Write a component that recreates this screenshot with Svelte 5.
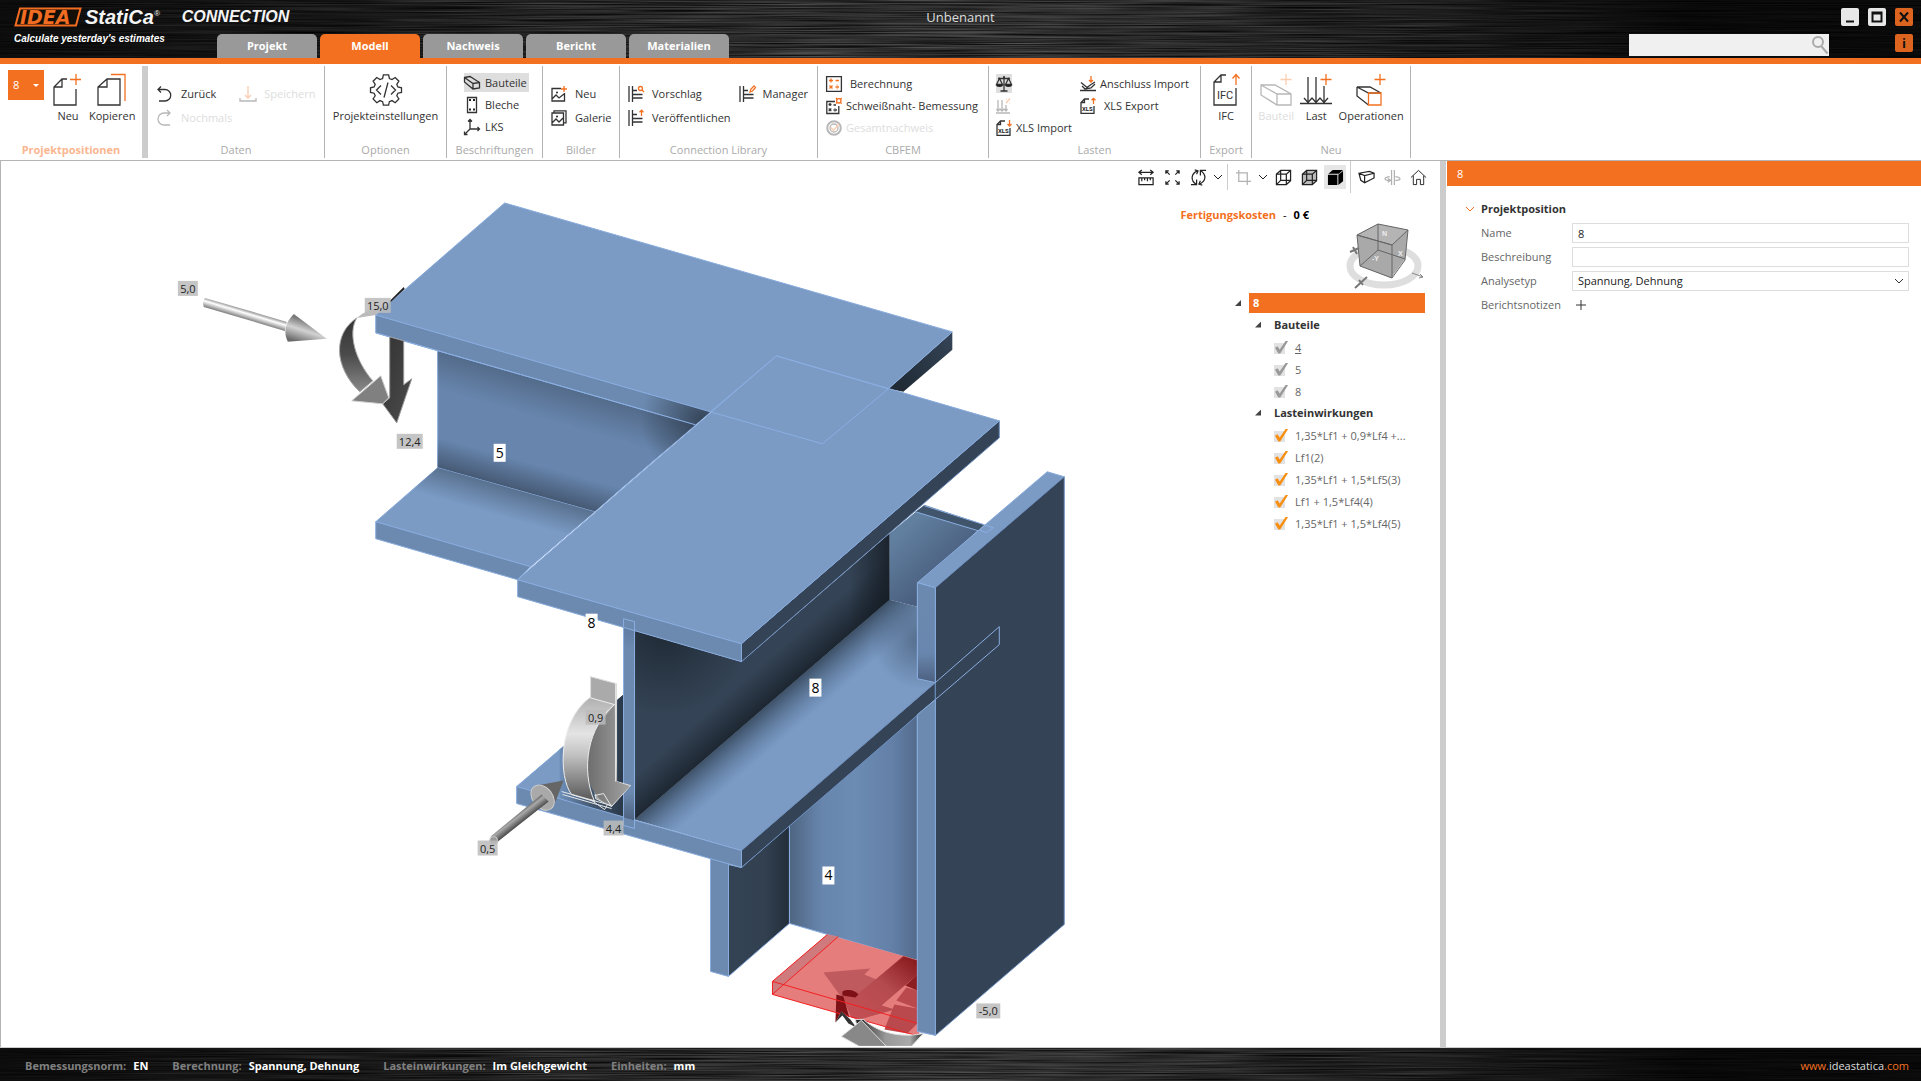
<script lang="ts">
  type Item = { icon: string; label: string; off?: boolean; active?: boolean };

  const tabs = ['Projekt', 'Modell', 'Nachweis', 'Bericht', 'Materialien'];
  let activeTab = $state('Modell');

  const labels: Item[] = [
    { icon: 'member', label: 'Bauteile', active: true },
    { icon: 'plate', label: 'Bleche' },
    { icon: 'axes', label: 'LKS' }
  ];

  const members = ['4', '5', '8'];
  const loads = ['1,35*Lf1 + 0,9*Lf4 +...', 'Lf1(2)', '1,35*Lf1 + 1,5*Lf5(3)', 'Lf1 + 1,5*Lf4(4)', '1,35*Lf1 + 1,5*Lf4(5)'];

  const status = [
    ['Bemessungsnorm:', 'EN'],
    ['Berechnung:', 'Spannung, Dehnung'],
    ['Lasteinwirkungen:', 'Im Gleichgewicht'],
    ['Einheiten:', 'mm']
  ];

  const forceTags = [
    { x: 178, y: 281, w: 20, text: '5,0' },
    { x: 365, y: 298, w: 26, text: '15,0' },
    { x: 397, y: 434, w: 26, text: '12,4' },
    { x: 586, y: 710, w: 20, text: '0,9' },
    { x: 604, y: 821, w: 20, text: '4,4' },
    { x: 478, y: 841, w: 20, text: '0,5' },
    { x: 977, y: 1004, w: 24, text: '-5,0' }
  ];

  const memberTags = [
    { x: 494, y: 444, text: '5' },
    { x: 586, y: 614, text: '8' },
    { x: 810, y: 679, text: '8' },
    { x: 823, y: 867, text: '4' }
  ];

  let name = $state('8');
  let description = $state('');
  let search = $state('');
</script>

{#snippet brushed()}
  <svg class="brushed" aria-hidden="true">
    <filter id="grain" x="0" y="0" width="100%" height="100%" color-interpolation-filters="sRGB">
      <feTurbulence type="fractalNoise" baseFrequency="0.008 0.9" numOctaves="2" seed="4" />
      <feColorMatrix values="0.45 0 0 0 -0.04  0.45 0 0 0 -0.04  0.45 0 0 0 -0.04  0 0 0 0 1" />
    </filter>
    <rect width="100%" height="100%" filter="url(#grain)" />
  </svg>
{/snippet}

{#snippet icon(kind: string)}
  <svg class="icon" viewBox="0 0 16 16" aria-hidden="true">
    {#if kind === 'undo'}
      <path d="M4 0.500 1 3.500l3 3M1 3.500h7a5.500 5.500 0 0 1 0 11.500H2" />
    {:else if kind === 'redo'}
      <path d="M10 0l3 3-3 3M13 3H7a5.500 5.500 0 0 0 0 12h6" />
    {:else if kind === 'save'}
      <path class="hot" d="M8 0v12M5 9l3 3 3-3" /><path d="M0 12v3h16v-3" />
    {:else if kind === 'member'}
      <path d="M0.500 2.500 6 1.500l9.500 6v5.500L9 14 0.500 7zM0.500 2.500 9 8.500l6.500-1M9 8.500V14" />
    {:else if kind === 'plate'}
      <path d="M3.500 0.500h9v15h-9z" /><path class="fill" d="M5 2h2v2H5zM9 2h2v2H9zM5 11.500h2v2H5zM9 11.500h2v2H9z" />
    {:else if kind === 'axes'}
      <path d="M6 10V0.500M4 2.500l2-2 2 2M6 10h9.500M13.500 8l2 2-2 2M6 10l-5.500 5.500M0.500 12.500v3h3" />
    {:else if kind === 'picture'}
      <path d="M10 2.500H1v12.500h12.500V7M1 13l4-4 3 3 5-4" /><circle class="fill" cx="6" cy="6.500" r="1" /><path class="hot" d="M13 0v6M10 3h6" />
    {:else if kind === 'gallery'}
      <path d="M1 3h11.500v12H1zM3 3V0.800h12v12h-2.500M1 13l4-4 3 3 4-4" /><circle class="fill" cx="6" cy="6.500" r="1" />
    {:else if kind === 'propose' || kind === 'manager' || kind === 'publish'}
      <path d="M1 0v16M4.500 0v16M4.500 4.500H9M4.500 8.500h10M4.500 12h10" />
      {#if kind === 'propose'}
        <circle class="hot" cx="12.500" cy="2.500" r="2" /><path class="hot" d="M14 4l2 2" />
      {:else if kind === 'manager'}
        <path class="hot" d="M11 6l1-3 3-3 1.500 1.500-3 3.500z" />
      {:else}
        <path class="hot" d="M13.500 6V0M11.500 2.200l2-2 2 2" />
      {/if}
    {:else if kind === 'calc'}
      <path d="M0.600 0.600h14.800v14.800H0.600z" /><path class="hot" d="M3 4.500h4M5 2.500v4M9.500 4.500h3.500M3.500 9.500l3 3M6.500 9.500l-3 3M9.500 11H13M11.200 8.800v0.800M11.200 12.400v0.800" />
    {:else if kind === 'weld'}
      <path d="M9 3.500H0.800v12h12V8M2.500 6.500h3M4 5v3M2.700 10.500l2.600 2.600M5.300 10.500l-2.600 2.600M7.500 7H10M7.500 12h3.500M9 10v0.500M9 13.500v0.500" /><circle class="hot" cx="12.800" cy="2.800" r="2.200" /><path class="hot" d="M10 0l1.200 1.200M15.600 0l-1.200 1.200M10 5.600l1.200-1.200M15.600 5.600l-1.200-1.200" />
    {:else if kind === 'overall'}
      <circle class="ring" cx="8" cy="8" r="6.800" /><circle cx="8" cy="8" r="4" /><path class="hot" d="M5 7.500l2.500 3L13 4" />
    {:else if kind === 'balance'}
      <path d="M8 1v13.500M4.500 15h7M2 2.500h12M3.500 2.500l-3 6h6zM12.500 2.500l-3 6h6zM7 1h2" /><path class="fill" d="M0 8.500h7a3.500 2.500 0 0 1-7 0zM9 8.500h7a3.500 2.500 0 0 1-7 0z" />
    {:else if kind === 'loadpct'}
      <path d="M2 2v11M6 2v11M10 7v6M0.500 11l1.500 2 2-2 2 2 2-2 2 2 1.500-2M0 15h14" /><path class="hot" d="M10 5l4-4.500M10.500 1h0.500M13.500 5h0.500" />
    {:else if kind === 'xlsin' || kind === 'xlsout'}
      <path d="M9 1H4.500L1 4.500V15.300h13V8M1 4.500h3.500V1" />
      <text x="2" y="13">XLS</text>
      {#if kind === 'xlsin'}
        <path class="hot" d="M13.500 0v6M11.500 4l2 2 2-2" />
      {:else}
        <path class="hot" d="M13.500 6V0.300M11.500 2.300l2-2 2 2" />
      {/if}
    {:else if kind === 'joint'}
      <path d="M0 14.500h16M1 6.500l6 5 4-3 4-2.500M2 10l3 3 6-1 4-4" /><path class="hot" d="M11 0v6M9 4l2 2 2-2" />
    {/if}
  </svg>
{/snippet}

{#snippet tool({ icon: kind, label, off, active }: Item)}
  <button class="tool" class:active disabled={off} aria-label={label || kind}>
    {@render icon(kind)}{#if label}<span>{label}</span>{/if}
  </button>
{/snippet}

{#snippet wireCube()}
  <svg viewBox="0 0 18 18" aria-hidden="true">
    <path class="body" d="M1.500 5.500 6 1.500h10.500v11L12 16.500H1.500z" />
    <path d="M1.500 5.500H12l4.500-4M12 5.500v11M6 1.500V12h10.500M6 12l-4.500 4.500" />
  </svg>
{/snippet}

<div class="page">
  <header>
    {@render brushed()}
    <div class="top-row">
      <div class="brand">
        <svg width="68" height="20" viewBox="0 0 68 20" aria-hidden="true">
          <path d="M6 1.500h60.500L62 18.500H1.500z" fill="#151007" stroke="#f26c22" stroke-width="2" />
          <text x="6" y="17">IDEA</text>
        </svg>
        <span class="product">StatiCa<sup>®</sup></span>
        <span class="module">CONNECTION</span>
      </div>
      <div class="title">Unbenannt</div>
      <div class="window-buttons">
        <button aria-label="Minimieren"><svg viewBox="0 0 18 18"><path d="M5 13.500h8" /></svg></button>
        <button aria-label="Maximieren"><svg viewBox="0 0 18 18"><path d="M4.500 4.500h9v9h-9zM4 5.500h10" /></svg></button>
        <button class="hot-button" aria-label="Schließen"><svg viewBox="0 0 18 18"><path d="M5 4.500l8 9M13 4.500l-8 9" /></svg></button>
      </div>
    </div>
    <div class="tab-row">
      <div class="tagline">Calculate yesterday's estimates</div>
      <nav>
        {#each tabs as tab}
          <button class="tab" class:selected={tab === activeTab} onclick={() => (activeTab = tab)}>{tab}</button>
        {/each}
      </nav>
      <div class="search">
        <input type="text" aria-label="Suche" bind:value={search} />
        <svg viewBox="0 0 18 20" aria-hidden="true"><circle cx="7" cy="7" r="5" /><path d="M10.500 11.500l6 7" /></svg>
      </div>
      <button class="info hot-button" aria-label="Info">i</button>
    </div>
  </header>

  <section class="ribbon">
    <div class="group current">
      <div class="content items">
        <button class="item-picker" aria-label="Projektposition">8 <span class="caret"></span></button>
        <button class="big new-item">
          <svg viewBox="0 0 32 32" aria-hidden="true"><path d="M15 5h-5L2 13v18h22V15M2 13h8V5" /><path class="hot" d="M24 0v11M18 5.500h11" /></svg>
          Neu
        </button>
        <button class="big">
          <svg viewBox="0 0 32 32" aria-hidden="true"><path d="M11 5h13v26H2V13zM2 13h9V5" /><path class="hot" d="M15 0.500h14V27" /></svg>
          Kopieren
        </button>
      </div>
      <h2>Projektpositionen</h2>
    </div>

    <div class="group">
      <div class="content pair data">
        <div class="stack">
          {@render tool({ icon: 'undo', label: 'Zurück' })}
          {@render tool({ icon: 'redo', label: 'Nochmals', off: true })}
        </div>
        <div class="stack">
          {@render tool({ icon: 'save', label: 'Speichern', off: true })}
        </div>
      </div>
      <h2>Daten</h2>
    </div>

    <div class="group">
      <div class="content center">
        <button class="big">
          <svg viewBox="0 0 32 32" aria-hidden="true">
            <path d="M13.400 0.800h5.200l0.800 3.700 2.600 1.100 3.200-2.100 3.700 3.700-2.100 3.200 1.100 2.600 3.600 0.800v4.600l-3.600 0.800-1.100 2.600 2.100 3.200-3.700 3.700-3.200-2.100-2.600 1.100-0.800 3.500h-5.200l-0.800-3.500-2.600-1.100-3.200 2.100-3.700-3.700 2.100-3.200-1.100-2.600-3.600-0.800v-4.600l3.600-0.800 1.100-2.600-2.100-3.200 3.700-3.700 3.200 2.100 2.600-1.100zM11 11.500 6.500 16l4.500 4.500M21 11.500l4.500 4.500-4.500 4.500M18 8.500l-4 15" />
          </svg>
          Projekteinstellungen
        </button>
      </div>
      <h2>Optionen</h2>
    </div>

    <div class="group">
      <div class="content triple member-labels">
        {#each labels as l}{@render tool(l)}{/each}
      </div>
      <h2>Beschriftungen</h2>
    </div>

    <div class="group">
      <div class="content stack pictures">
        {@render tool({ icon: 'picture', label: 'Neu' })}
        {@render tool({ icon: 'gallery', label: 'Galerie' })}
      </div>
      <h2>Bilder</h2>
    </div>

    <div class="group">
      <div class="content pair library">
        <div class="stack">
          {@render tool({ icon: 'propose', label: 'Vorschlag' })}
          {@render tool({ icon: 'publish', label: 'Veröffentlichen' })}
        </div>
        <div class="stack">
          {@render tool({ icon: 'manager', label: 'Manager' })}
        </div>
      </div>
      <h2>Connection Library</h2>
    </div>

    <div class="group">
      <div class="content triple tight cbfem">
        {@render tool({ icon: 'calc', label: 'Berechnung' })}
        {@render tool({ icon: 'weld', label: 'Schweißnaht- Bemessung' })}
        {@render tool({ icon: 'overall', label: 'Gesamtnachweis', off: true })}
      </div>
      <h2>CBFEM</h2>
    </div>

    <div class="group">
      <div class="content pair loads">
        <div class="triple tight">
          {@render tool({ icon: 'balance', label: '', active: true })}
          {@render tool({ icon: 'loadpct', label: '', off: true })}
          {@render tool({ icon: 'xlsin', label: 'XLS Import' })}
        </div>
        <div class="triple tight">
          {@render tool({ icon: 'joint', label: 'Anschluss Import' })}
          {@render tool({ icon: 'xlsout', label: 'XLS Export' })}
        </div>
      </div>
      <h2>Lasten</h2>
    </div>

    <div class="group">
      <div class="content center">
        <button class="big">
          <svg viewBox="0 0 32 32" aria-hidden="true"><path d="M16 1h-5L4 8v23h22V14M4 8h7V1" /><path class="hot" d="M26 11V0.500M22.500 4.500l3.500-4 3.500 4" /><text class="ifc" x="7" y="25">IFC</text></svg>
          IFC
        </button>
      </div>
      <h2>Export</h2>
    </div>

    <div class="group">
      <div class="content create">
        <button class="big" disabled>
          <svg viewBox="0 0 32 32" aria-hidden="true"><path d="M1 11h14l16 9v11H17L1 21zM1 11l16 9h14M17 20v11" /><path class="hot" d="M26 0v11M20.500 5.500h11" /></svg>
          Bauteil
        </button>
        <button class="big">
          <svg viewBox="0 0 32 32" aria-hidden="true"><path d="M8 3v25M16 3v25M24 12v16M0 29.500h32M4 24l4 4.500 4-4.500 4 4.500 4-4.500 4 4.500 4-4.500" /><path class="hot" d="M26 0v11M20.500 5.500h11" /></svg>
          Last
        </button>
        <button class="big">
          <svg viewBox="0 0 32 32" aria-hidden="true"><path d="M2 13h13l11 6H13.500zM2 13v9l11.500 9" /><path class="hot" d="M13.500 19H26v12H13.500zM25 0v11M19.500 5.500h11" /></svg>
          Operationen
        </button>
      </div>
      <h2>Neu</h2>
    </div>
  </section>

  <main>
    <section class="viewport">
      <svg class="scene" viewBox="1 161 1440 886" preserveAspectRatio="xMinYMin meet">
        <defs>
          <linearGradient id="webTop" gradientUnits="userSpaceOnUse" x1="560" y1="386" x2="550" y2="421"><stop stop-color="#3c4c60" stop-opacity="0.450" /><stop offset="1" stop-color="#3c4c60" stop-opacity="0" /></linearGradient>
          <linearGradient id="webBottom" gradientUnits="userSpaceOnUse" x1="500" y1="486" x2="508" y2="457"><stop stop-color="#39495e" stop-opacity="0.750" /><stop offset="1" stop-color="#39495e" stop-opacity="0" /></linearGradient>
          <radialGradient id="underFlange" gradientUnits="userSpaceOnUse" cx="703" cy="420" r="62"><stop stop-color="#2f3e50" stop-opacity="0.900" /><stop offset="1" stop-color="#2f3e50" stop-opacity="0" /></radialGradient>
          <linearGradient id="flangeShade" gradientUnits="userSpaceOnUse" x1="500" y1="486" x2="492" y2="514"><stop stop-color="#43566d" stop-opacity="0.600" /><stop offset="1" stop-color="#43566d" stop-opacity="0" /></linearGradient>
          <radialGradient id="darkTop" gradientUnits="userSpaceOnUse" cx="665" cy="630" r="85"><stop stop-color="#1a242e" stop-opacity="0.800" /><stop offset="1" stop-color="#1a242e" stop-opacity="0" /></radialGradient>
          <linearGradient id="darkBottom" gradientUnits="userSpaceOnUse" x1="762" y1="710" x2="740" y2="685"><stop stop-color="#19222c" stop-opacity="0.850" /><stop offset="1" stop-color="#19222c" stop-opacity="0" /></linearGradient>
          <linearGradient id="darkRight" gradientUnits="userSpaceOnUse" x1="890" y1="0" x2="850" y2="0"><stop stop-color="#151c24" stop-opacity="0.800" /><stop offset="1" stop-color="#151c24" stop-opacity="0" /></linearGradient>
          <linearGradient id="floorShade" gradientUnits="userSpaceOnUse" x1="762" y1="710" x2="786" y2="738"><stop stop-color="#324356" stop-opacity="0.850" /><stop offset="1" stop-color="#4b6586" stop-opacity="0" /></linearGradient>
          <radialGradient id="floorRight" gradientUnits="userSpaceOnUse" cx="922" cy="640" r="50"><stop stop-color="#3a4d64" stop-opacity="0.600" /><stop offset="1" stop-color="#3a4d64" stop-opacity="0" /></radialGradient>
          <linearGradient id="backWeb" gradientUnits="userSpaceOnUse" x1="905" y1="530" x2="945" y2="572"><stop stop-color="#617f9f" /><stop offset="1" stop-color="#4b6080" /></linearGradient>
          <linearGradient id="column" gradientUnits="userSpaceOnUse" x1="790" y1="0" x2="918" y2="0"><stop stop-color="#4f6581" /><stop offset="0.250" stop-color="#6785ad" /><stop offset="0.500" stop-color="#6c8cb3" /><stop offset="0.800" stop-color="#6480a8" /><stop offset="1" stop-color="#536b8c" /></linearGradient>
          <linearGradient id="columnDark" gradientUnits="userSpaceOnUse" x1="729" y1="0" x2="790" y2="0"><stop stop-color="#344354" /><stop offset="0.600" stop-color="#324050" /><stop offset="1" stop-color="#222d39" /></linearGradient>
          <linearGradient id="leftFloor" gradientUnits="userSpaceOnUse" x1="560" y1="0" x2="624" y2="0"><stop stop-color="#6f90bb" /><stop offset="0.500" stop-color="#43576f" /><stop offset="1" stop-color="#2a3848" /></linearGradient>
          <linearGradient id="endWeb" x1="0" y1="0" x2="0" y2="1"><stop stop-color="#5f7ba2" /><stop offset="0.120" stop-color="#6c8ab0" /><stop offset="0.850" stop-color="#6c8ab0" /><stop offset="1" stop-color="#4c617e" /></linearGradient>
          <linearGradient id="flangeEnd" gradientUnits="userSpaceOnUse" x1="0" y1="583" x2="0" y2="683"><stop stop-color="#6c8ab0" /><stop offset="0.700" stop-color="#6987ae" /><stop offset="1" stop-color="#4c6080" /></linearGradient>
          <linearGradient id="behindPlate" gradientUnits="userSpaceOnUse" x1="953" y1="340" x2="900" y2="385"><stop stop-color="#344355" /><stop offset="1" stop-color="#202b36" /></linearGradient>
          <linearGradient id="rod" gradientUnits="userSpaceOnUse" x1="246" y1="309" x2="243" y2="319"><stop stop-color="#777" /><stop offset="0.400" stop-color="#fff" /><stop offset="1" stop-color="#777" /></linearGradient>
          <linearGradient id="cone" gradientUnits="userSpaceOnUse" x1="305" y1="320" x2="298" y2="342"><stop stop-color="#777" /><stop offset="0.450" stop-color="#d2d2d2" /><stop offset="1" stop-color="#6b6b6b" /></linearGradient>
          <linearGradient id="band" x1="0" y1="0" x2="0" y2="1"><stop stop-color="#333" /><stop offset="0.500" stop-color="#4b4b4b" /><stop offset="1" stop-color="#898989" /></linearGradient>
          <linearGradient id="drop" x1="0" y1="0" x2="1" y2="1"><stop stop-color="#333" /><stop offset="1" stop-color="#4c4c4c" /></linearGradient>
          <linearGradient id="silver" x1="0" y1="0" x2="0" y2="1"><stop stop-color="#b0b0b0" /><stop offset="0.350" stop-color="#e4e4e4" /><stop offset="0.550" stop-color="#c2c2c2" /><stop offset="1" stop-color="#555" /></linearGradient>
          <linearGradient id="steel" x1="0" y1="0" x2="1" y2="0"><stop stop-color="#6b6b6b" /><stop offset="1" stop-color="#a2a2a2" /></linearGradient>
          <linearGradient id="shaft" gradientUnits="userSpaceOnUse" x1="516" y1="814" x2="523" y2="823"><stop stop-color="#555" /><stop offset="0.350" stop-color="#aaa" /><stop offset="1" stop-color="#444" /></linearGradient>
          <linearGradient id="redArrow" x1="0" y1="1" x2="1" y2="0"><stop stop-color="#c65055" /><stop offset="0.550" stop-color="#b54b4f" /><stop offset="1" stop-color="#841418" /></linearGradient>
          <linearGradient id="ribbonTail" x1="0" y1="0" x2="1" y2="0"><stop stop-color="#222" /><stop offset="0.450" stop-color="#999" /><stop offset="0.800" stop-color="#aaa" /><stop offset="1" stop-color="#333" /></linearGradient>
        </defs>

        <!-- member 5 -->
        <path fill="url(#behindPlate)" d="M953 332v18l-49 42-15-3z" />
        <path class="mid" d="M438 350l258 75-101 87-157-44z" />
        <path fill="url(#webTop)" d="M438 350l258 75-101 87-157-44z" />
        <path fill="url(#webBottom)" d="M438 350l258 75-101 87-157-44z" />
        <path class="top" d="M438 468l157 44-64 55-155-45z" />
        <path fill="url(#flangeShade)" d="M438 468l157 44-64 55-155-45z" />
        <path class="front" d="M376 522l155 45-13 13-142-41z" />
        <path class="front" d="M376 315l335 97-15 13-320-92z" />
        <path fill="url(#underFlange)" d="M376 315l335 97-116 100-157-44V350l-62-18z" />
        <path class="edge" d="M376 333l320 92" />
        <path class="top" d="M505 203l448 129-64 57-178 23-335-97z" />

        <!-- column 4 behind member 8 -->
        <path fill="url(#backWeb)" d="M890 534l35-29 60 20-67 61v21l-28-7z" />
        <path fill="#40556b" d="M925 506l60 19-6 6-63-19z" />
        <path class="edge" d="M925 506l60 19M916 512l63 19" />
        <path fill="url(#columnDark)" class="edge" d="M729 865l13 3 48-42v98l-61 53z" />
        <path fill="url(#column)" class="edge" d="M790 826l128-111v246l-128-37z" />
        <path class="front" d="M711 859l18 5v113l-18-5z" />

        <!-- selected support plate -->
        <path fill="#e67d7d" d="M828 935l-55 47v13l147 42V961l-92-26z" />
        <path fill="#cf7b7e" d="M828 935l-55 47v13l66-58z" />
        <path fill="#bf5a5e" d="M824 973l47-4-6 6 12 5 27-24 14 5v14l-36 31 13 4-35 10-8-2-9-21-3-2z" />
        <path fill="url(#redArrow)" d="M904 957l14 4v14l-36 31 13 4-35 10-8-2-9-21 16-3z" />
        <path fill="#8c1d20" d="M906 986l12-11v16z" />
        <path fill="#b9494d" d="M897 1001l10-13 11 3v18zM895 1005l23 4v15l-10 10-23-4z" />
        <path fill="#7d1116" d="M837 995l7 2 6 21-8-6-6 11zM843 992c6-3 13-1 16 3l-3 3-13-2z" />
        <path class="red-line" d="M828 935l-55 47v13l147 42M773 982l145 42M839 937l-66 58" />
        <path fill="#333" d="M836 1023l6-11 9 8 6 8-8-4-6-8z" />
        <path fill="url(#ribbonTail)" d="M856 1020l8 0c18 16 42 18 60 14l-12 13h-50z" stroke="#ddd" />
        <path fill="#888" stroke="#ddd" d="M862 1021l-20 16 18 10h27z" />

        <!-- member 8, lower flange and web -->
        <path fill="url(#leftFloor)" d="M517 787l107-92v122l-15 -2z" />
        <path class="top" d="M517 787l48-41v55z" />
        <path fill="url(#leftFloor)" d="M560 750l64-55v123l-64-19z" />
        <path class="top line-off" d="M635 820l255-220 28 7v70l18 6-194 168z" />
        <path fill="url(#floorShade)" d="M635 820l255-220 28 7v70l18 6-194 168z" />
        <path fill="url(#floorRight)" d="M890 600l28 7v70l18 6-194 168-107-31z" />
        <path class="dark line-off" d="M635 631l107 31 148-128v66L635 820z" />
        <path fill="url(#darkTop)" d="M635 631l107 31 148-128v66L635 820z" />
        <path fill="url(#darkBottom)" d="M635 631l107 31 148-128v66L635 820z" />
        <path fill="url(#darkRight)" d="M635 631l107 31 148-128v66L635 820z" />
        <path class="dark" d="M742 851l194-168v17L742 868z" />
        <path class="front" d="M517 787l225 64v17l-225-64z" />
        <path fill="url(#endWeb)" d="M624 627l11 4v190l-11-3z" />
        <path class="edge" d="M624 619l11 3v207l-11-3z" />

        <!-- member 8, upper flange -->
        <path class="dark" d="M742 644l258-223v17L742 662z" />
        <path class="front" d="M518 580l224 64v18l-224-65z" />
        <path class="top" d="M518 580l259-224 223 65-258 223z" />
        <path class="edge" d="M777 356l112 33-66 55-112-32zM624 627v-8l11 3v9" />

        <!-- column 4, near flange -->
        <path class="top" d="M918 583l130-111 17 5-129 111z" />
        <path class="dark" d="M936 588l129-111v448L936 1036z" />
        <path fill="url(#flangeEnd)" class="edge" d="M918 583l18 5v95l-18-4z" />
        <path class="front" d="M918 715l18-15v336l-18-4z" />
        <path class="edge" d="M936 683l64-56v18l-64 55M980 530l7 3 7-5-9-3" />

        <!-- forces at member 5 -->
        <path fill="url(#rod)" d="M205 298l82 24-2 9-81-24q-2-5 1-9z" />
        <path fill="url(#cone)" d="M294 314l33 25-39 3q-7-15 6-28z" />
        <path fill="#222" d="M390 301l14-14 1 2-15 14z" />
        <path fill="#bbb" d="M357 318q8-8 28-12l-9 9-19 3z" />
        <path fill="url(#band)" stroke="#aaa" d="M357 318c-9 15-2 42 16 63l-13 11c-26-25-27-58-3-74z" />
        <path fill="url(#drop)" stroke="#999" d="M390 337l14 4v44l8-6-15 44-14-19 7-6z" />
        <path fill="#808080" stroke="#ccc" d="M381 376l8 22-6 6-31-3z" />

        <!-- forces at member 8 -->
        <path fill="#aaa" stroke="#ddd" d="M591 677l26 7v98l14 4-19 21-16-8-5-70z" />
        <path fill="url(#steel)" d="M615 705l2 77 13 5-18 19c-20-5-31-35-24-66z" />
        <path fill="url(#silver)" stroke="#eee" d="M590 698l25 7c-27 22-34 65-20 97l-23-7c-13-17-14-73 18-97z" />
        <path class="white-line" d="M562 792l50 14M563 795l49 14M595 796l9-2 8 13M591 800l14 10 3-5M616 684v98" />
        <path fill="#666" d="M537 786l27-5-8 21z" />
        <ellipse cx="543" cy="798" rx="10" ry="14" fill="#a9a9a9" stroke="#ccc" transform="rotate(-38 543 798)" />
        <path fill="url(#shaft)" d="M542 795l7 7-52 41-6-6z" />
        <circle cx="494" cy="841" r="4" fill="#999" stroke="#ccc" />

        {#each forceTags as tag}
          <rect class="force-box" x={tag.x} y={tag.y} width={tag.w} height="15" />
          <text class="force" x={tag.x + tag.w / 2} y={tag.y + 12}>{tag.text}</text>
        {/each}
        {#each memberTags as tag}
          <rect class="member-box" x={tag.x} y={tag.y} width="12" height="18" />
          <text class="member" x={tag.x + 6} y={tag.y + 14}>{tag.text}</text>
        {/each}
      </svg>

      <div class="overlay">
        <div class="view-tools">
          <button aria-label="Bemaßung"><svg viewBox="0 0 18 18"><path d="M1 3.500h15M4 1L1 3.500 4 6M13 1l3 2.500L13 6M1 9.500h15v7H1zM4 10v3M7 10v2M10 10v3M13 10v2" /></svg></button>
          <button aria-label="Einpassen"><svg viewBox="0 0 18 18"><path d="M2 5V2h3M2 2l4 4M16 5V2h-3M16 2l-4 4M2 13v3h3M2 16l4-4M16 13v3h-3M16 16l-4-4" /></svg></button>
          <button aria-label="Drehen"><svg viewBox="0 0 18 18"><path d="M1 16.500h6V11M7 16.500C0 12 1 5 8 2M5 1l3.500 1L7 5.500M17 1.500h-6V7M11 1.500c7 4.500 6 11.500-1 14.500M13 17l-3.500-1L11 12.500" /></svg></button>
          <button class="narrow" aria-label="Drehoptionen"><svg viewBox="0 0 10 10"><path d="M1 3l4 4 4-4" /></svg></button>
          <span class="divider"></span>
          <button disabled aria-label="Zuschneiden"><svg viewBox="0 0 18 18"><path d="M4 1v12h13M1 4h12v13" /></svg></button>
          <button class="narrow" aria-label="Zuschneideoptionen"><svg viewBox="0 0 10 10"><path d="M1 3l4 4 4-4" /></svg></button>
          <button aria-label="Drahtmodell">{@render wireCube()}</button>
          <button class="shaded" aria-label="Transparent">{@render wireCube()}</button>
          <button class="on" aria-label="Schattiert"><svg viewBox="0 0 18 18"><path class="fill" d="M1 6h10v11H1zM1.500 5 6 1h11l-4.500 4zM12 6l5-4v11l-5 4z" /></svg></button>
          <span class="divider tall"></span>
          <button aria-label="Perspektive"><svg viewBox="0 0 18 18"><path d="M1 4.500l11-2 5 2v5L7 14.500 3 12zM1 4.500l6 2.500 10-2.500M7 7v7.500" /></svg></button>
          <button disabled aria-label="Spiegeln"><svg viewBox="0 0 18 18"><path d="M8 1v16M11 1v16M6 8c-7 1-6 4 0 4h1M4 10l3 2-3 2M12 8c7 1 6 4 0 4" /></svg></button>
          <button class="thin" aria-label="Startansicht"><svg viewBox="0 0 18 18"><path d="M1 9l8-7.500L17 9M3.500 7v9.500H7V11h4v5.500h3.500V7" /></svg></button>
        </div>

        <p class="cost"><strong>Fertigungskosten</strong> <span>-</span> <b>0 €</b></p>

        <svg class="orientation" width="80" height="68" viewBox="0 0 80 68" aria-hidden="true">
          <ellipse cx="39" cy="43" rx="34" ry="19" fill="none" stroke="#dedede" stroke-width="7" />
          <path d="M12 12 33 1l30 6-3 29-14 19-31-12z" fill="#a9a9a9" />
          <path d="M12 12 33 1l30 6-16 15zM47 22v33" class="cube-face" />
          <path d="M12 12l35 10M63 7l-3 30-13 18-32-12-3-31M33 1v26l27 9M33 27 15 43" class="cube-line" />
          <text x="37" y="13">N</text><text x="27" y="38">-Y</text><text x="53" y="33">X</text>
          <path d="M10 65l12-11M14 57l4 5M5 29l9-4M8 24l4 7" stroke="#777" stroke-width="2" fill="none" />
          <path d="M67 50l11 4M75 51l3 3-4 1" stroke="#888" fill="none" />
        </svg>

        <div class="tree">
          <div class="node root"><i class="twist"></i><span>8</span></div>
          <div class="branch">
            <h3><i class="twist"></i>Bauteile</h3>
            {#each members as member, i}
              <label class:underlined={i === 0}><input type="checkbox" class="grey" checked /><span>{member}</span></label>
            {/each}
            <h3><i class="twist"></i>Lasteinwirkungen</h3>
            {#each loads as load}
              <label><input type="checkbox" checked /><span>{load}</span></label>
            {/each}
          </div>
        </div>
      </div>
    </section>

    <aside>
      <h1>8</h1>
      <div class="properties">
        <h3><svg viewBox="0 0 10 10" aria-hidden="true"><path d="M1 3l4 4 4-4" /></svg>Projektposition</h3>
        <label for="name">Name</label>
        <input id="name" type="text" bind:value={name} />
        <label for="description">Beschreibung</label>
        <input id="description" type="text" bind:value={description} />
        <label for="analysis">Analysetyp</label>
        <div class="select">
          <select id="analysis"><option>Spannung, Dehnung</option></select>
          <svg viewBox="0 0 10 10" aria-hidden="true"><path d="M1 3l4 4 4-4" /></svg>
        </div>
        <label for="notes">Berichtsnotizen</label>
        <button id="notes" class="add" aria-label="Berichtsnotiz hinzufügen"><svg viewBox="0 0 10 10"><path d="M5 0v10M0 5h10" /></svg></button>
      </div>
    </aside>
  </main>

  <footer>
    {@render brushed()}
    <dl>
      {#each status as [key, value]}
        <div><dt>{key}</dt><dd>{value}</dd></div>
      {/each}
    </dl>
    <a href="#website">www.<span>ideastatica</span>.com</a>
  </footer>
</div>

<style>
  :global(body) {
    margin: 0;
    background: #fff;
  }

  .page {
    --orange: #f37021;
    --line: #b4b4b4;
    display: flex;
    flex-direction: column;
    min-height: 100vh;
    font: 11px/16px 'Open Sans', 'Noto Sans', sans-serif;
    color: #333;
  }

  .page :is(h1, h2, h3, p, dl, dd) { margin: 0; }

  button {
    padding: 0;
    border: 0;
    background: none;
    color: inherit;
    font: inherit;
  }

  svg {
    display: block;
    flex: none;
    overflow: visible;
  }

  /* title bar */
  header, footer {
    position: relative;
    background: #181818;
    overflow: hidden;
  }

  header { border-bottom: 6px solid var(--orange); }

  .brushed {
    position: absolute;
    inset: 0;
    width: 100%;
    height: 100%;
  }

  header::before, footer::before {
    content: '';
    position: absolute;
    inset: 0;
    z-index: 1;
    background: linear-gradient(90deg, rgba(0, 0, 0, 0.75), rgba(0, 0, 0, 0.5) 18%, rgba(0, 0, 0, 0.2) 32%, rgba(0, 0, 0, 0) 52%, rgba(0, 0, 0, 0.35) 72%, rgba(0, 0, 0, 0.8) 88%, rgba(0, 0, 0, 0.8));
  }

  .top-row, .tab-row, dl, footer a {
    position: relative;
    z-index: 2;
  }

  .top-row {
    display: grid;
    grid-template-columns: 1fr auto 1fr;
    align-items: center;
    height: 34px;
    color: #f4f4f4;
  }

  .brand {
    display: flex;
    align-items: center;
    padding-left: 14px;
    font: italic bold 20px/20px 'Liberation Sans', sans-serif;
  }

  .brand text {
    font: italic bold 19px 'DejaVu Sans', sans-serif;
    fill: #f26c22;
  }

  .product { margin: 0 22px 0 3px; }
  .product sup { font-size: 8px; line-height: 8px; font-weight: normal; vertical-align: 8px; }
  .module { font-size: 16px; }
  .title { font-size: 13px; color: #ddd; }

  .window-buttons {
    display: flex;
    justify-content: flex-end;
    gap: 9px;
    padding-right: 8px;
  }

  .window-buttons button {
    width: 18px;
    height: 18px;
    border-radius: 2px;
    background: #e8e8e8;
  }

  .window-buttons path {
    fill: none;
    stroke: #111;
    stroke-width: 2;
  }

  .page .hot-button { background: #dd641f; }

  .tab-row {
    display: flex;
    height: 24px;
  }

  .tagline {
    width: 203px;
    padding-left: 14px;
    font: italic bold 10px/10px 'Liberation Sans', sans-serif;
    color: #fff;
  }

  nav {
    display: flex;
    flex: 1;
    gap: 3px;
  }

  .tab {
    width: 100px;
    border-radius: 5px 5px 0 0;
    background: #999;
    color: #fff;
    font-weight: bold;
  }

  .tab.selected { background: var(--orange); }

  .search {
    display: flex;
    align-items: center;
    width: 200px;
    height: 22px;
    background: #f0f0f0;
  }

  .search input {
    flex: 1;
    min-width: 0;
    border: 0;
    background: none;
  }

  .search svg {
    width: 18px;
    height: 20px;
    fill: none;
    stroke: #aaa;
    stroke-width: 2;
  }

  .page .info {
    width: 18px;
    height: 18px;
    margin: 0 8px 0 66px;
    border-radius: 2px;
    color: #111;
    font-size: 13px;
    font-weight: bold;
  }

  /* ribbon */
  .ribbon {
    display: grid;
    grid-template-columns: 148px 177px 122px 96px 77px 198px 171px 212px 51px 159px;
    padding: 2px 0;
    border-bottom: 1px solid var(--line);
  }

  .group {
    display: flex;
    flex-direction: column;
    height: 92px;
    box-sizing: border-box;
    border-right: 1px solid var(--line);
  }

  .current { border-right: 6px solid #ccc; }

  .group h2 {
    font-size: 11px;
    line-height: 16px;
    font-weight: normal;
    text-align: center;
    color: #aaa;
  }

  .page .current h2 {
    font-weight: bold;
    color: #fab68f;
  }

  .content { height: 76px; }
  .items, .create, .pair { display: flex; }
  .center { display: flex; justify-content: center; }
  .items { padding-left: 8px; }
  .create { justify-content: space-evenly; }

  .item-picker {
    display: flex;
    align-items: center;
    justify-content: space-between;
    width: 36px;
    height: 30px;
    margin-top: 4px;
    padding: 0 5px;
    background: var(--orange);
    color: #fff;
  }

  .caret {
    border: 3px solid transparent;
    border-top-color: #fff;
    border-bottom: 0;
  }

  .big {
    display: flex;
    flex-direction: column;
    align-items: center;
    gap: 2px;
    height: 60px;
    padding-top: 8px;
  }

  .new-item { margin: 0 5px 0 8px; }

  .big svg {
    width: 32px;
    height: 32px;
  }

  .big svg, .icon {
    fill: none;
    stroke: #333;
    stroke-width: 1.3;
  }

  .hot { stroke: var(--orange); }

  .icon .fill {
    fill: #222;
    stroke: none;
  }

  .view-tools .fill { fill: #000; stroke: none; }

  .ring { stroke-width: 2; }

  .icon {
    width: 16px;
    height: 16px;
  }

  .icon text {
    font: bold 6px 'Roboto', sans-serif;
    fill: #222;
    stroke: none;
  }

  .big .ifc {
    font: 11px 'Roboto', sans-serif;
    fill: #333;
    stroke: none;
  }

  .tool {
    display: flex;
    align-items: center;
    gap: 8px;
    width: max-content;
    height: 19px;
  }

  .tool:disabled, .big:disabled { color: #ddd; }
  :disabled svg { opacity: 0.35; }
  .active { background: #dedede; }

  .stack {
    display: flex;
    flex-direction: column;
    gap: 5px;
    padding-top: 9px;
  }

  .pair > .stack { padding-top: 18px; }

  .triple {
    display: flex;
    flex-direction: column;
    gap: 3px;
    padding-top: 7px;
    box-sizing: border-box;
  }

  .tight .tool { gap: 4px; }
  .data { padding-left: 9px; }
  .data .stack + .stack { margin-left: 8px; }
  .member-labels { padding-left: 17px; }
  .member-labels .tool { gap: 5px; padding-right: 2px; }
  .pictures { padding: 18px 0 0 8px; height: 58px; }
  .library { padding-left: 8px; gap: 8px; }
  .content.cbfem { padding: 8px 0 0 8px; }
  .cbfem .tool:first-child { gap: 8px; }
  .loads { padding-left: 7px; gap: 8px; }
  .loads .triple { padding-top: 8px; }
  .loads .tool:nth-child(2) { gap: 8px; }

  /* 3D view */
  main {
    display: grid;
    grid-template-columns: 1fr 474px;
    flex: 1;
  }

  .viewport {
    display: grid;
    grid-template-columns: 1fr;
    border-left: 1px solid var(--line);
    border-right: 6px solid #ccc;
    margin-right: 1px;
    overflow: hidden;
  }

  .scene, .overlay { grid-area: 1 / 1; }

  .scene {
    width: 100%;
    overflow: hidden;
  }

  .scene .top { fill: #7b9bc5; stroke: #88abdd; }
  .scene .front { fill: #6c8ab0; stroke: #88abdd; }
  .scene .mid { fill: #6785ad; stroke: #88abdd; }
  .scene .dark { fill: #344355; stroke: #6c8fc0; }
  .scene .line-off { stroke: none; }
  .edge { stroke: #8bafe2; }
  .edge:not([fill]) { fill: none; }

  .red-line {
    fill: none;
    stroke: #f32020;
  }

  .white-line {
    fill: none;
    stroke: #e8e8e8;
  }

  .force-box { fill: #bbb; fill-opacity: 0.85; }
  .member-box { fill: #fff; }

  .force, .member {
    text-anchor: middle;
    font-size: 11px;
    fill: #222;
  }

  .member { font-size: 14px; fill: #000; }

  .overlay {
    justify-self: end;
    display: flex;
    flex-direction: column;
    align-items: flex-end;
    padding-right: 15px;
  }

  .view-tools {
    display: flex;
    align-items: center;
    gap: 4px;
    height: 32px;
    margin-right: -4px;
  }

  .view-tools button {
    display: grid;
    place-items: center;
    width: 22px;
    height: 24px;
  }

  .view-tools .narrow { width: 10px; }
  .view-tools .on { background: #e6e6e6; }

  .view-tools svg {
    width: 17px;
    height: 17px;
    fill: none;
    stroke: #222;
    stroke-width: 1.3;
  }

  .view-tools .narrow svg { width: 10px; height: 10px; }
  .view-tools .thin svg, .view-tools .narrow svg { stroke-width: 1; }
  .shaded .body { fill: #bbb; }

  .divider {
    height: 26px;
    border-left: 1px solid #ccc;
  }

  .tall { height: 32px; }

  .cost {
    display: flex;
    gap: 7px;
    color: #000;
  }

  .page .cost { margin: 14px 116px 0 0; }
  .cost strong { color: var(--orange); }

  .orientation text {
    font: bold 7px 'Liberation Sans', sans-serif;
    fill: #eee;
  }

  .cube-face { fill: #b4b4b4; stroke: #666; }
  .cube-line { fill: none; stroke: #666; }

  .tree {
    width: 190px;
    padding-top: 2px;
  }

  .node, .tree h3, .tree label {
    display: flex;
    align-items: center;
  }

  .twist {
    width: 6px;
    height: 6px;
    background: #444;
    clip-path: polygon(100% 0, 100% 100%, 0 100%);
  }

  .root { gap: 8px; }

  .root span {
    flex: 1;
    padding-left: 4px;
    background: var(--orange);
    color: #fff;
    font-weight: bold;
    line-height: 20px;
  }

  .branch {
    padding: 2px 0 0 20px;
  }

  .branch h3 {
    gap: 13px;
    height: 19px;
    padding-bottom: 3px;
    font-size: 11px;
    color: #333;
  }

  .branch label {
    gap: 10px;
    height: 22px;
    padding-left: 19px;
    color: #666;
    white-space: nowrap;
  }

  .branch label.underlined { text-decoration: underline; }

  .branch input {
    position: relative;
    appearance: none;
    width: 11px;
    height: 11px;
    margin: 0;
    background: #e2e2e2;
  }

  .branch input:checked::after {
    content: '';
    position: absolute;
    inset: -2px -3px 0 1px;
    background: #f78f12;
    clip-path: polygon(0 55%, 20% 45%, 36% 70%, 84% 0, 100% 6%, 40% 100%, 26% 100%);
  }

  .branch .grey:checked::after { background: #999; }

  /* properties */
  aside h1 {
    padding-left: 10px;
    background: var(--orange);
    color: #fff;
    font-size: 11px;
    line-height: 25px;
    font-weight: normal;
  }

  .properties {
    display: grid;
    grid-template-columns: 91px 1fr;
    grid-auto-rows: 20px;
    gap: 4px 0;
    align-items: center;
    padding: 13px 12px 0 34px;
  }

  .properties h3 {
    grid-column: 1 / -1;
    display: flex;
    align-items: center;
    gap: 6px;
    margin-left: -16px;
    font-size: 11px;
  }

  .properties label { color: #666; }

  .properties svg {
    width: 10px;
    height: 10px;
    fill: none;
    stroke: #333;
  }

  .properties h3 svg { stroke: var(--orange); }

  .properties input, .properties select {
    grid-area: 1 / 1;
    box-sizing: border-box;
    width: 100%;
    height: 20px;
    padding: 0 5px;
    border: 1px solid #ddd;
    border-radius: 0;
    background: #fff;
    color: #222;
    font: inherit;
    appearance: none;
  }

  .properties input { grid-area: auto; }
  .select { display: grid; align-items: center; }

  .select svg {
    grid-area: 1 / 1;
    justify-self: end;
    margin-right: 5px;
    pointer-events: none;
  }

  .add { justify-self: start; padding: 5px 4px; }

  /* status bar */
  footer {
    display: flex;
    justify-content: space-between;
    align-items: center;
    height: 33px;
    border-top: 1px solid #ccc;
    font-weight: bold;
  }

  dl {
    display: flex;
    gap: 24px;
    padding: 3px 0 0 25px;
  }

  dl div { display: flex; gap: 7px; }
  dt { color: #808080; }
  dd { color: #fff; }

  footer a {
    padding: 3px 12px 0 0;
    color: var(--orange);
    font-weight: normal;
    text-decoration: none;
  }

  footer a span { color: #ddd; }
</style>
